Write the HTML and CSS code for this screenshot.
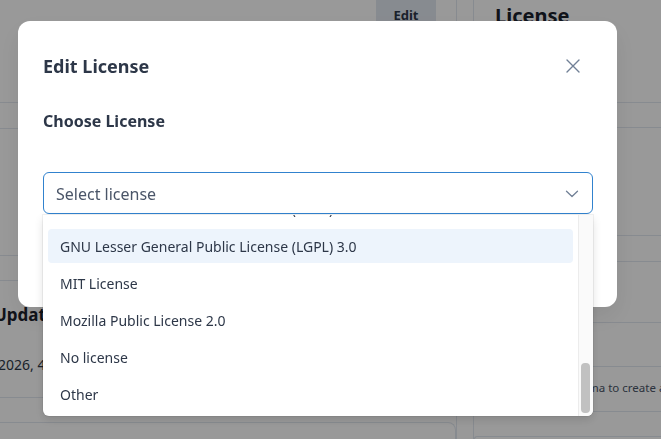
FILE: index.html
```html
<!DOCTYPE html>
<html lang="en">
<head>
<meta charset="utf-8">
<title>Edit License</title>
<link rel="stylesheet" href="styles.css">
</head>
<body>
  <div class="page">
    <main class="main">
      <section class="row row-head">
        <button class="edit-btn" type="button">Edit</button>
      </section>
      <section class="row row-tabs"></section>
      <section class="row row-desc"></section>
      <section class="row row-meta"></section>
      <section class="row row-updated">
        <h3 class="meta-title">Updated</h3>
        <p class="meta-value">2026, 4:12 PM</p>
      </section>
      <div class="card"></div>
    </main>
    <div class="spacer"></div>
    <aside class="side">
      <section class="srow srow-head"><h2 class="side-title">License</h2></section>
      <section class="srow srow-a"></section>
      <section class="srow srow-b"></section>
      <section class="srow srow-c"></section>
      <section class="srow srow-d"></section>
      <section class="srow srow-e"></section>
      <section class="srow srow-f"><p class="side-note">Upload a schema to create an API</p></section>
      <div class="card side-card"></div>
    </aside>
  </div>

  <div class="overlay"></div>

  <div class="modal" role="dialog" aria-labelledby="modal-title">
    <header class="modal-header">
      <h2 class="modal-title" id="modal-title">Edit License</h2>
      <button class="close-btn" type="button" aria-label="Close">
        <svg width="14" height="14" viewBox="0 0 14 14"><path d="M1 1L13 13M13 1L1 13" stroke="#718096" stroke-width="1.4" fill="none" stroke-linecap="round"/></svg>
      </button>
    </header>
    <div class="modal-body">
      <h3 class="field-label">Choose License</h3>
      <div class="select">
        <div class="select-control">
          <span class="select-placeholder">Select license</span>
          <svg class="chevron" width="14" height="8" viewBox="0 0 14 8"><path d="M1.5 1.2L7 6.5L12.5 1.2" stroke="#718096" stroke-width="1.3" fill="none" stroke-linecap="round" stroke-linejoin="round"/></svg>
        </div>
        <div class="menu">
          <div class="menu-scroll">
            <ul class="options">
              <li class="option">GNU Lesser General Public License (LGPL) 2.1</li>
              <li class="option is-active">GNU Lesser General Public License (LGPL) 3.0</li>
              <li class="option">MIT License</li>
              <li class="option">Mozilla Public License 2.0</li>
              <li class="option">No license</li>
              <li class="option">Other</li>
            </ul>
          </div>
          <div class="scrollbar"><div class="thumb"></div></div>
        </div>
      </div>
    </div>
  </div>
</body>
</html>
```
FILE: styles.css
```css
* { box-sizing: border-box; }

html, body {
  margin: 0;
  height: 100%;
  overflow: hidden;
  background: #ffffff;
  font-family: "Noto Sans", "Open Sans", sans-serif;
  color: #2d3748;
}

/* page behind the dialog */
.page {
  display: grid;
  grid-template-columns: 457px 16px 1fr;
  height: 100%;
  overflow: hidden;
}

.main {
  border-right: 1px solid #e2e8f0;
  display: flex;
  flex-direction: column;
  min-height: 0;
}

.side {
  border-left: 1px solid #e2e8f0;
  display: flex;
  flex-direction: column;
  min-height: 0;
  min-width: 0;
  overflow: hidden;
}

.row, .srow {
  border-bottom: 1px solid #e2e8f0;
  flex: none;
}

.row-head { height: 103px; display: flex; justify-content: flex-end; align-items: flex-start; padding-right: 20px; }
.row-tabs { height: 26px; }
.row-desc { height: 127px; }
.row-meta { height: 25px; }
.row-updated { height: 117px; padding-top: 22px; }

.edit-btn {
  width: 60px;
  height: 34px;
  margin-top: -6px;
  border: none;
  border-radius: 0 0 4px 4px;
  background: #e2e8f0;
  color: #2d3748;
  font: 700 13px/1 "Noto Sans", sans-serif;
  padding-top: 10px;
}

.meta-title {
  margin: 0 0 0 -6px;
  font-size: 17px;
  line-height: 24px;
  font-weight: 700;
  color: #1a202c;
}

.meta-value {
  margin: 28px 0 0 -2px;
  font-size: 14px;
  line-height: 20px;
  color: #2d3748;
}

.card {
  margin-top: 24px;
  height: 18px;
  border: 1px solid #e2e8f0;
  border-bottom: none;
  border-radius: 8px 8px 0 0;
  margin-left: -10px;
}

.srow-head { height: 103px; padding: 2px 0 0 21px; }
.srow-a { height: 25px; }
.srow-b { height: 108px; }
.srow-c { height: 26px; }
.srow-d { height: 61px; }
.srow-e { height: 44px; }
.srow-f { height: 45px; padding: 12px 0 0 38px; }

.side-title {
  margin: 0;
  font-size: 20px;
  line-height: 28px;
  font-weight: 700;
  color: #1a202c;
}

.side-note {
  margin: 0;
  font-size: 11.5px;
  line-height: 18px;
  color: #4a5568;
  white-space: nowrap;
}

.side-card {
  margin: 24px 0 0 0;
  height: 4px;
  border-radius: 8px 0 0 0;
  border-right: none;
}

/* dialog */
.overlay {
  position: fixed;
  inset: 0;
  background: rgba(0, 0, 0, 0.4);
}

.modal {
  position: fixed;
  left: 18px;
  top: 21px;
  width: 599px;
  height: 286px;
  background: #ffffff;
  border-radius: 12px;
  box-shadow: 0 10px 25px rgba(0, 0, 0, 0.08);
}

.modal-header {
  display: flex;
  align-items: center;
  justify-content: space-between;
  padding: 33px 32px 0 25px;
}

.modal-title {
  margin: 0;
  font-size: 18px;
  line-height: 24px;
  font-weight: 700;
  color: #2d3748;
}

.close-btn {
  width: 24px;
  height: 24px;
  padding: 0;
  border: none;
  background: transparent;
  display: flex;
  align-items: center;
  justify-content: center;
}

.modal-body {
  padding: 31px 24px 0 25px;
}

.field-label {
  margin: 0 0 39px;
  font-size: 16px;
  line-height: 24px;
  font-weight: 700;
  color: #2d3748;
}

.select {
  position: relative;
}

.select-control {
  height: 42px;
  border: 1px solid #3182ce;
  border-radius: 6px;
  display: flex;
  align-items: center;
  justify-content: space-between;
  padding: 1px 13px 0 12px;
}

.select-placeholder {
  font-size: 16px;
  line-height: 24px;
  color: #4a5568;
}

.chevron { display: block; }

.menu {
  position: absolute;
  left: 0;
  right: 0;
  top: 43px;
  height: 201px;
  background: #ffffff;
  border-radius: 0 0 6px 6px;
  box-shadow: 0 0 0 1px rgba(0, 0, 0, 0.05), 0 4px 10px rgba(0, 0, 0, 0.12);
  display: flex;
  overflow: hidden;
}

.menu-scroll {
  flex: 1;
  overflow: hidden;
}

/* list scrolled so the earlier entries sit above the visible area */
.options {
  list-style: none;
  margin: -24px 0 0;
  padding: 0 5px;
}

.option {
  height: 34px;
  margin-bottom: 3px;
  padding-left: 12px;
  border-radius: 4px;
  font-size: 14px;
  line-height: 35px;
  color: #2d3748;
  white-space: nowrap;
}

.option:first-child {
  margin-bottom: 4px;
}

.option.is-active {
  background: #edf4fc;
}

.scrollbar {
  width: 15px;
  flex: none;
  background: #fafafa;
  border-left: 1px solid #ececec;
  padding: 148px 3px 0 2px;
}

.thumb {
  height: 50px;
  border-radius: 4px;
  background: #c1c1c1;
}
```
